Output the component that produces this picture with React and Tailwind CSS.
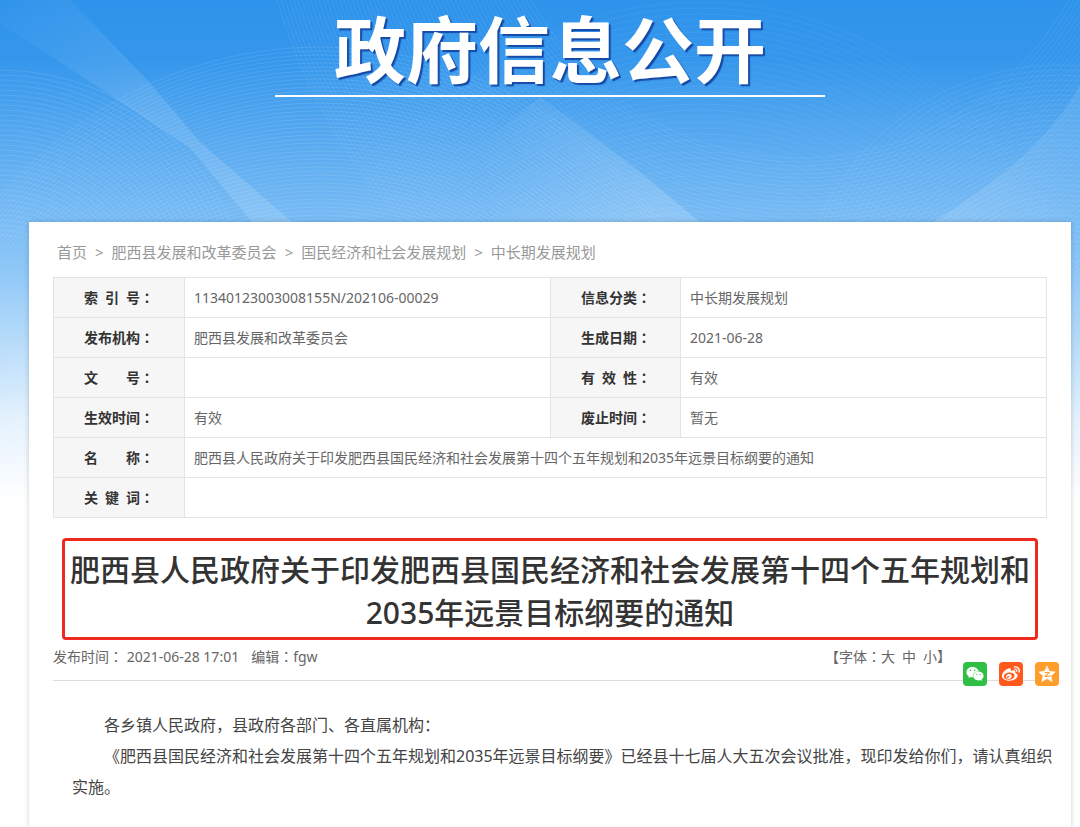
import { FaWeibo, FaWeixin } from 'react-icons/fa';

const crumbs = ['首页', '肥西县发展和改革委员会', '国民经济和社会发展规划', '中长期发展规划'];

const infoRows = [
  [
    { label: '索\u2002引\u2002号：', value: '11340123003008155N/202106-00029' },
    { label: '信息分类：', value: '中长期发展规划' },
  ],
  [
    { label: '发布机构：', value: '肥西县发展和改革委员会' },
    { label: '生成日期：', value: '2021-06-28' },
  ],
  [
    { label: '文\u3000\u3000号：', value: '' },
    { label: '有\u2002效\u2002性：', value: '有效' },
  ],
  [
    { label: '生效时间：', value: '有效' },
    { label: '废止时间：', value: '暂无' },
  ],
  [
    {
      label: '名\u3000\u3000称：',
      value: '肥西县人民政府关于印发肥西县国民经济和社会发展第十四个五年规划和2035年远景目标纲要的通知',
    },
  ],
  [{ label: '关\u2002键\u2002词：', value: '' }],
];

const range = (n) => Array.from({ length: n }, (_, i) => i);

// Label colons use the TC face, which centres them in their cell
function Label({ children }) {
  const [name, rest] = children.split('：');
  return (
    <span>
      {name}
      <span className="font-['Noto_Sans_CJK_TC',sans-serif]">：</span>
      {rest}
    </span>
  );
}

function Backdrop() {
  return (
    <svg
      className="absolute inset-x-0 top-0 h-[500px] w-full"
      viewBox="0 0 1080 500"
      preserveAspectRatio="none"
      aria-hidden="true"
    >
      <defs>
        <linearGradient id="sky" x1="0" y1="0" x2="0" y2="1">
          <stop offset="0" stopColor="#2e93eb" />
          <stop offset="0.12" stopColor="#3597ec" />
          <stop offset="0.24" stopColor="#4fa5ef" />
          <stop offset="0.42" stopColor="#74b9f4" />
          <stop offset="0.54" stopColor="#8cc6f7" />
          <stop offset="0.68" stopColor="#b4daf9" />
          <stop offset="0.84" stopColor="#e3f1fd" />
          <stop offset="1" stopColor="#ffffff" />
        </linearGradient>
        <linearGradient id="beam" gradientUnits="userSpaceOnUse" x1="0" y1="0" x2="280" y2="222">
          <stop offset="0" stopColor="#fff" stopOpacity="0.01" />
          <stop offset="0.5" stopColor="#fff" stopOpacity="0.12" />
          <stop offset="1" stopColor="#fff" stopOpacity="0.14" />
        </linearGradient>
        <linearGradient id="wedge" gradientUnits="userSpaceOnUse" x1="660" y1="190" x2="490" y2="225">
          <stop offset="0" stopColor="#fff" stopOpacity="0.16" />
          <stop offset="1" stopColor="#fff" stopOpacity="0" />
        </linearGradient>
        <linearGradient id="corner" gradientUnits="userSpaceOnUse" x1="1000" y1="150" x2="1080" y2="210">
          <stop offset="0" stopColor="#fff" stopOpacity="0.12" />
          <stop offset="1" stopColor="#fff" stopOpacity="0.02" />
        </linearGradient>
      </defs>
      <rect width="1080" height="500" fill="url(#sky)" />
      <path d="M0 0H70L150 83L200 142L292 222H252L190 148L115 98L0 23Z" fill="url(#beam)" />
      <path d="M540 97L580 126L640 172L702 224H380Z" fill="url(#wedge)" />
      <path d="M1080 85C1050 140 1000 180 930 224H1080Z" fill="url(#corner)" />
      <g fill="none" stroke="#fff" strokeWidth="1" strokeOpacity="0.1">
        {range(90).map((i) => (
          <ellipse key={`a${i}`} cx="320" cy="520" rx={440 - i * 3} ry={473 - i * 4} />
        ))}
        {range(34).map((i) => (
          <circle key={`b${i}`} cx="0" cy="320" r={250 - i * 5} />
        ))}
      </g>
      <g fill="none" stroke="#fff" strokeWidth="1" strokeOpacity="0.05">
        {range(60).map((i) => (
          <ellipse key={`c${i}`} cx="700" cy="480" rx={420 - i * 4} ry={478 - i * 6} />
        ))}
      </g>
      <g fill="none" stroke="#fff" strokeWidth="1" strokeOpacity="0.08">
        {range(60).map((i) => (
          <circle key={`d${i}`} cx="800" cy="-150" r={308 + i * 4} />
        ))}
        {range(40).map((i) => (
          <circle key={`e${i}`} cx="1060" cy="330" r={265 - i * 5} />
        ))}
      </g>
    </svg>
  );
}

function QzoneIcon() {
  return (
    <svg className="h-[18px] w-[18px]" viewBox="0 0 24 24" aria-hidden="true">
      <path
        fill="#fff"
        stroke="#fff"
        strokeWidth="1"
        strokeLinejoin="round"
        d="M12 1.5l3.2 7 7.6.8-5.7 5.1 1.7 7.6L12 18.1l-6.8 3.9 1.7-7.6L1.2 9.3l7.6-.8z"
      />
      <path fill="none" stroke="#ff9e2a" strokeWidth="1.4" d="M9 10.2c2.2-.5 4.2-.5 6 0L9.5 15c2.6.5 4.8.4 7.5-.6" />
    </svg>
  );
}

function InfoTable() {
  return (
    <table className="mt-[13px] w-full table-fixed border-collapse bg-white text-sm text-[#666]">
      <colgroup>
        <col className="w-[131px]" />
        <col />
        <col className="w-[130px]" />
        <col />
      </colgroup>
      <tbody>
        {infoRows.map((row, i) => (
          <tr key={i} className="h-10">
            {row.map((cell) => [
              <th
                key={cell.label}
                scope="row"
                className="border border-[#e4e4e4] bg-[#f6f6f6] pl-[30px] text-left font-bold whitespace-nowrap text-[#333]"
              >
                <Label>{cell.label}</Label>
              </th>,
              <td
                key={`${cell.label}-value`}
                colSpan={row.length === 1 ? 3 : 1}
                className="border border-[#e4e4e4] px-[9px]"
              >
                {cell.value}
              </td>,
            ])}
          </tr>
        ))}
      </tbody>
    </table>
  );
}

export default function App() {
  return (
    <div className="relative flex min-h-screen flex-col overflow-hidden bg-white pr-[9px] pl-[29px] font-['Noto_Sans','Noto_Sans_CJK_SC',sans-serif]">
      <Backdrop />

      <header className="relative flex h-[222px] flex-col items-center">
        <div className="flex h-[97px] w-[550px] max-w-full items-center justify-center border-b-2 border-white pt-0.5">
          <p className="text-7xl leading-none font-bold whitespace-nowrap text-white [text-shadow:2px_2px_1px_#1549a5]">
            政府信息公开
          </p>
        </div>
      </header>

      <main className="relative flex-1 bg-white px-6 pt-[18px] shadow-[0_0_5px_rgba(0,0,0,0.2)]">
        <nav className="flex gap-2 pl-1 text-[15px] leading-6 text-[#999]">
          {crumbs.map((name, i) => (
            <span key={name} className="flex gap-2">
              {i > 0 && <span>&gt;</span>}
              <a href="#">{name}</a>
            </span>
          ))}
        </nav>

        <InfoTable />

        <h1 className="mx-[9px] mt-5 rounded border-3 border-[#ee2a20] pt-[7px] pb-[3px] text-center text-[30px] leading-[43px] font-medium text-[#333]">
          肥西县人民政府关于印发肥西县国民经济和社会发展第十四个五年规划和2035年远景目标纲要的通知
        </h1>

        <div className="relative flex h-[41px] items-start justify-between border-b border-[#ddd] pt-1 text-sm leading-6 text-[#666]">
          <div className="flex gap-3">
            <Label>发布时间： 2021-06-28 17:01</Label>
            <Label>编辑：fgw</Label>
          </div>
          <div className="mr-24 flex">
            <Label>【字体：</Label>
            <div className="flex gap-[7px]">
              <button type="button">大</button>
              <button type="button">中</button>
              <button type="button">小</button>
            </div>
            <span>】</span>
          </div>
          <div className="absolute -right-3 -bottom-1.5 flex gap-3 text-white">
            <a href="#" aria-label="微信" className="flex size-6 items-center justify-center rounded bg-[#2fbf45]">
              <FaWeixin className="size-[18px]" />
            </a>
            <a href="#" aria-label="微博" className="flex size-6 items-center justify-center rounded bg-[#ff5a1c]">
              <FaWeibo className="size-[18px]" />
            </a>
            <a href="#" aria-label="QQ空间" className="flex size-6 items-center justify-center rounded bg-[#ff9e2a]">
              <QzoneIcon />
            </a>
          </div>
        </div>

        <article className="mt-[29px] -mr-2 ml-[19px] text-base leading-[31px] text-[#444]">
          <p className="indent-[2em]">各乡镇人民政府，县政府各部门、各直属机构：</p>
          <p className="indent-[2em]">
            《肥西县国民经济和社会发展第十四个五年规划和2035年远景目标纲要》已经县十七届人大五次会议批准，现印发给你们，请认真组织实施。
          </p>
        </article>
      </main>
    </div>
  );
}
